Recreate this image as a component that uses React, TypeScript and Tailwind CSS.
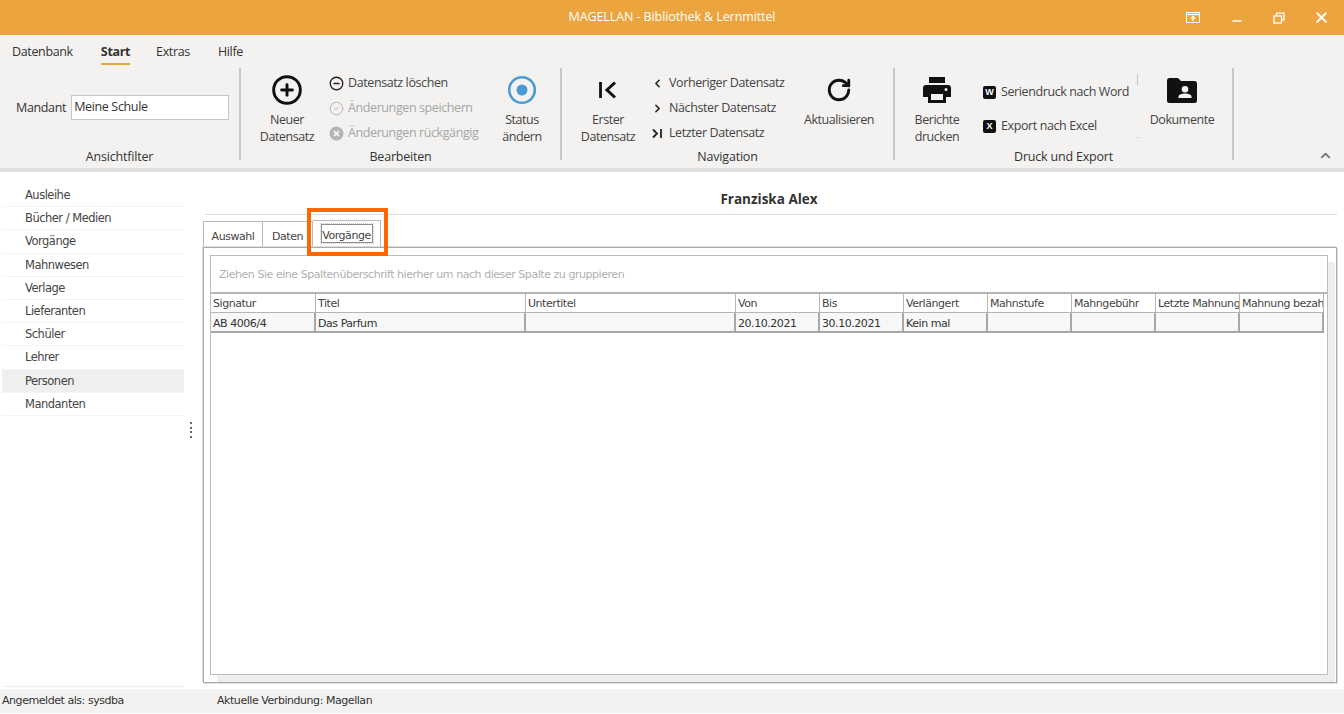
import { CirclePlus, CircleMinus, CircleCheck, ChevronLeft, ChevronRight, RotateCw, ChevronUp, Minus, X } from "lucide-react";
import type { ReactNode } from "react";

const sidebarItems = ["Ausleihe", "Bücher / Medien", "Vorgänge", "Mahnwesen", "Verlage", "Lieferanten", "Schüler", "Lehrer", "Personen", "Mandanten"];

const columns = [
  { title: "Signatur", value: "AB 4006/4", width: "w-[105px]" },
  { title: "Titel", value: "Das Parfum", width: "w-[210px]" },
  { title: "Untertitel", value: "", width: "w-[210px]" },
  { title: "Von", value: "20.10.2021", width: "w-[84px]" },
  { title: "Bis", value: "30.10.2021", width: "w-[84px]" },
  { title: "Verlängert", value: "Kein mal", width: "w-[84px]" },
  { title: "Mahnstufe", value: "", width: "w-[84px]" },
  { title: "Mahngebühr", value: "", width: "w-[84px]" },
  { title: "Letzte Mahnung", value: "", width: "w-[84px]" },
  { title: "Mahnung bezahlt", value: "", width: "w-[84px]" },
];

function Separator() {
  return <div className="w-[2px] h-[92px] mt-[33px] bg-[#c8c8c8] shrink-0" />;
}

function Group({ label, width, children }: { label: string; width: string; children: ReactNode }) {
  return (
    <div className={`${width} shrink-0 h-full flex flex-col`}>
      <div className="flex-1 flex min-h-0">{children}</div>
      <div className="h-[22px] text-center text-[12.5px] leading-[22px] tracking-[-0.2px] text-[#333]">{label}</div>
    </div>
  );
}

function LargeButton({ icon, lines, width }: { icon: ReactNode; lines: string[]; width: string }) {
  return (
    <div className={`${width} shrink-0 flex flex-col items-center pt-[5px] text-[12.5px] leading-[17px] tracking-[-0.45px] text-[#444]`}>
      <div className="h-[38px] w-[38px] flex items-center justify-center mb-[2px]">{icon}</div>
      {lines.map((l) => (
        <div key={l} className="whitespace-nowrap">{l}</div>
      ))}
    </div>
  );
}

function SmallButton({ icon, label, disabled }: { icon: ReactNode; label: string; disabled?: boolean }) {
  return (
    <div className={`h-[25px] flex items-center gap-[4px] text-[12.5px] tracking-[-0.4px] whitespace-nowrap ${disabled ? "text-[#a6a6a6]" : "text-[#444]"}`}>
      <span className="w-[15px] h-[15px] flex items-center justify-center shrink-0">{icon}</span>
      {label}
    </div>
  );
}

function OfficeBadge({ letter }: { letter: string }) {
  return (
    <span className="w-[13px] h-[13px] rounded-[2px] bg-[#111] text-white text-[9px] font-bold leading-[13px] tracking-normal text-center font-['Liberation_Sans',sans-serif]">{letter}</span>
  );
}

export default function App() {
  return (
    <div className="h-[714px] w-[1344px] overflow-hidden bg-white flex flex-col font-['Open_Sans',sans-serif] relative">
      {/* title bar */}
      <div className="h-[35px] shrink-0 bg-[#eba43e] flex items-center relative">
        <div className="flex-1 text-center text-white text-[12.5px] tracking-[-0.1px]">MAGELLAN - Bibliothek &amp; Lernmittel</div>
        <div className="absolute right-0 top-0 h-[35px] flex items-center text-white">
          <svg width="16" height="13" viewBox="0 0 16 13" fill="none" stroke="white" className="mr-[29px]">
            <rect x="1.5" y="1.5" width="13" height="10" strokeWidth="1" />
            <path d="M1 3.5h14" strokeWidth="1.4" />
            <path d="M8 10V5.5M5.8 7.6 8 5.4l2.2 2.2" strokeWidth="1.3" />
          </svg>
          <Minus size={14} strokeWidth={2.2} className="mr-[29px] translate-y-[3px]" />
          <svg width="12" height="12" viewBox="0 0 12 12" fill="none" stroke="white" strokeWidth="1.3" className="mr-[28px]">
            <rect x="1" y="4" width="7.5" height="7" />
            <path d="M3.5 4V1.2H11v6.6H8.5" />
          </svg>
          <X size={17} strokeWidth={2.8} className="mr-[14px]" />
        </div>
      </div>

      {/* ribbon */}
      <div className="h-[133px] shrink-0 bg-[#f3f2f1] relative border-b-[4px] border-[#dfdfdf] box-content">
        <div className="absolute left-[12px] top-[8px] flex text-[12.5px] tracking-[-0.35px] text-[#333] leading-[18px]">
          <span className="mr-[28px]">Datenbank</span>
          <span className="mr-[26px] font-bold border-b-[2px] border-[#eba43e] h-[22px]">Start</span>
          <span className="mr-[28px]">Extras</span>
          <span>Hilfe</span>
        </div>
        <div className="flex h-full">
          <Group label="Ansichtfilter" width="w-[239px]">
            <div className="flex items-start gap-[5px] pl-[16px] pt-[60px] text-[12.5px] tracking-[-0.35px] text-[#333]">
              <span className="leading-[25px]">Mandant</span>
              <div className="w-[158px] h-[25px] bg-white border border-[#c6c6c6] pl-[2px] leading-[22px]">Meine Schule</div>
            </div>
          </Group>
          <Separator />
          <Group label="Bearbeiten" width="w-[319px]">
            <div className="flex pt-[31px]">
              <LargeButton width="w-[92px]" lines={["Neuer", "Datensatz"]} icon={<CirclePlus size={32} strokeWidth={2.2} className="text-[#111]" />} />
              <div className="w-[163px] -ml-[4px] pt-[5px]">
                <SmallButton label="Datensatz löschen" icon={<CircleMinus size={15} strokeWidth={2.2} className="text-[#222]" />} />
                <SmallButton disabled label="Änderungen speichern" icon={<CircleCheck size={15} strokeWidth={1.6} className="text-[#b5b5b5]" />} />
                <SmallButton
                  disabled
                  label="Änderungen rückgängig"
                  icon={
                    <svg width="15" height="15" viewBox="0 0 15 15">
                      <circle cx="7.5" cy="7.5" r="7" fill="#b5b5b5" />
                      <path d="M5 5l5 5M10 5l-5 5" stroke="#f3f2f1" strokeWidth="1.8" />
                    </svg>
                  }
                />
              </div>
              <LargeButton
                width="w-[60px]"
                lines={["Status", "ändern"]}
                icon={
                  <svg width="30" height="30" viewBox="0 0 30 30">
                    <circle cx="15" cy="15" r="12.8" fill="none" stroke="#4a9ad4" strokeWidth="2.6" />
                    <circle cx="15" cy="15" r="5.5" fill="#4a9ad4" />
                  </svg>
                }
              />
            </div>
          </Group>
          <Separator />
          <Group label="Navigation" width="w-[331px]">
            <div className="flex pt-[31px]">
              <LargeButton
                width="w-[92px]"
                lines={["Erster", "Datensatz"]}
                icon={
                  <svg width="22" height="22" viewBox="0 0 22 22" fill="none" stroke="#111">
                    <path d="M3.5 3v16" strokeWidth="2.8" />
                    <path d="M18 3.5 10 11l8 7.5" strokeWidth="3" />
                  </svg>
                }
              />
              <div className="w-[146px] -ml-[4px] pt-[5px]">
                <SmallButton label="Vorheriger Datensatz" icon={<ChevronLeft size={13} strokeWidth={3} className="text-[#222]" />} />
                <SmallButton label="Nächster Datensatz" icon={<ChevronRight size={13} strokeWidth={3} className="text-[#222]" />} />
                <SmallButton
                  label="Letzter Datensatz"
                  icon={
                    <svg width="11" height="11" viewBox="0 0 11 11" fill="none" stroke="#222">
                      <path d="M1 1.500 5 5.500 1 9.500" strokeWidth="1.8" />
                      <path d="M9 1v9" strokeWidth="1.8" />
                    </svg>
                  }
                />
              </div>
              <LargeButton width="w-[86px]" lines={["Aktualisieren"]} icon={<RotateCw size={26} strokeWidth={2.6} className="text-[#111]" />} />
            </div>
          </Group>
          <Separator />
          <Group label="Druck und Export" width="w-[337px]">
            <div className="flex pt-[31px]">
              <LargeButton
                width="w-[84px]"
                lines={["Berichte", "drucken"]}
                icon={
                  <svg width="30" height="28" viewBox="0 0 30 28" fill="#111">
                    <path d="M7 1h16v6H7z" />
                    <path fillRule="evenodd" d="M4 9h22a3 3 0 0 1 3 3v9h-5v6H6v-6H1v-9a3 3 0 0 1 3-3Zm5 9v6h12v-6H9Zm15-6a1.500 1.500 0 1 0 0 3 1.500 1.500 0 0 0 0-3Z" />
                  </svg>
                }
              />
              <div className="w-[155px] ml-[3px] pt-[14px]">
                <div className="h-[34px]">
                  <SmallButton label="Seriendruck nach Word" icon={<OfficeBadge letter="W" />} />
                </div>
                <SmallButton label="Export nach Excel" icon={<OfficeBadge letter="X" />} />
              </div>
              <div className="w-[1px] shrink-0 pt-[8px] flex flex-col items-center">
                <div className="w-[1px] h-[11px] bg-[#c4c4c4]" />
                <div className="w-[1px] h-[1px] mt-[52px] bg-[#aaaaaa]" />
              </div>
              <LargeButton
                width="w-[88px]"
                lines={["Dokumente"]}
                icon={
                  <svg width="30" height="25" viewBox="0 0 30 25" fill="#111">
                    <path fillRule="evenodd" d="M2.500 0H11l3 3h13.500A2.500 2.500 0 0 1 30 5.500v17a2.500 2.500 0 0 1-2.500 2.500h-25A2.500 2.500 0 0 1 0 22.500v-20A2.500 2.500 0 0 1 2.500 0ZM18 8a3.300 3.300 0 1 0 0 6.600A3.300 3.300 0 0 0 18 8Zm-6.500 12h13v-1.500c0-2-3.500-3-6.500-3s-6.500 1-6.500 3V20Z" />
                  </svg>
                }
              />
            </div>
          </Group>
          <Separator />
        </div>
        <ChevronUp size={15} strokeWidth={3} className="absolute right-[11px] bottom-[5px] text-[#777]" />
      </div>

      {/* main area */}
      <div className="flex-1 flex min-h-0 font-['DejaVu_Sans',sans-serif]">
        <div className="w-[182px] shrink-0 ml-[2px] pt-[12px] flex flex-col border-b border-[#eeeeee] mb-[2px]">
          {sidebarItems.map((item) => (
            <div
              key={item}
              className={`h-[23.2px] shrink-0 pl-[23px] text-[11.5px] leading-[23px] tracking-[-0.5px] text-[#444] border-b border-[#f0f5fa] ${item === "Personen" ? "bg-[#efefef]" : ""}`}
            >
              {item}
            </div>
          ))}
        </div>
        <div className="w-[19px] shrink-0 pr-[5px] flex flex-col items-center justify-center gap-[2.5px] pb-[1px]">
          <span className="w-[2px] h-[2px] bg-[#666]" />
          <span className="w-[2px] h-[2px] bg-[#666]" />
          <span className="w-[2px] h-[2px] bg-[#666]" />
          <span className="w-[2px] h-[2px] bg-[#666]" />
        </div>
        <div className="w-[1134px] shrink-0 pb-[6px] flex flex-col">
          <div className="h-[43px] shrink-0 ml-[2px] border-b border-[#dcdcdc] text-center text-[13.5px] font-bold leading-[54px] text-[#333] font-['Open_Sans',sans-serif] pr-[4px]">
            Franziska Alex
          </div>
          <div className="flex h-[32px] items-end shrink-0 text-[11px] text-[#444] tracking-[-0.45px]">
            <div className="h-[26px] w-[60px] border border-b-0 border-[#b8b8b8] text-center leading-[29px]">Auswahl</div>
            <div className="h-[26px] w-[50px] border-t border-r border-[#b8b8b8] text-center leading-[29px]">Daten</div>
            <div className="h-[27px] w-[68px] border-t border-r border-[#b8b8b8] flex justify-center pt-[3px] relative z-10">
              <span className="h-[19px] w-[52px] border border-[#8c8c8c] outline-1 outline-dotted outline-[#ccc] text-center leading-[21px]">Vorgänge</span>
            </div>
          </div>
          <div className="flex-1 min-h-0 border border-[#aaaaaa] shadow-[1px_1px_0_#dddddd,-1px_-1px_0_#dddddd] bg-white pl-[6px] pr-[8px] pt-[7px] pb-[7px]">
            <div className="h-full bg-white border border-[#bdbdbd] shadow-[7px_7px_0_#eeeeee] flex flex-col">
              <div className="h-[38px] shrink-0 pl-[8px] text-[11px] leading-[38px] tracking-[-0.45px] text-[#b0b0b0] border-b-2 border-[#b5b5b5]">
                Ziehen Sie eine Spaltenüberschrift hierher um nach dieser Spalte zu gruppieren
              </div>
              <div className="flex h-[19px] shrink-0 text-[11px] text-[#444] tracking-[-0.45px]">
                {columns.map((c) => (
                  <div key={c.title} className={`${c.width} shrink-0 pl-[2px] pr-[1px] leading-[20px] overflow-hidden whitespace-nowrap border-r border-b border-[#b5b5b5] bg-white`}>
                    {c.title}
                  </div>
                ))}
              </div>
              <div className="flex h-[20px] shrink-0 text-[11px] text-[#333] tracking-[-0.45px]">
                {columns.map((c) => (
                  <div key={c.title} className={`${c.width} shrink-0 pl-[2px] leading-[21px] overflow-hidden whitespace-nowrap border-r-2 border-b-2 border-[#a8a8a8] bg-[#f7f7f7]`}>
                    {c.value}
                  </div>
                ))}
              </div>
            </div>
          </div>
        </div>
      </div>

      {/* status bar */}
      <div className="h-[24px] shrink-0 mb-[1px] bg-[#f3f2f1] flex text-[11px] leading-[23px] text-[#333] tracking-[-0.45px] font-['DejaVu_Sans',sans-serif]">
        <span className="w-[217px] pl-[2px]">Angemeldet als: sysdba</span>
        <span>Aktuelle Verbindung: Magellan</span>
      </div>

      {/* tutorial highlight */}
      <div className="absolute left-[307px] top-[208px] w-[81px] h-[48px] border-[4px] border-[#ff6600]" />
    </div>
  );
}
